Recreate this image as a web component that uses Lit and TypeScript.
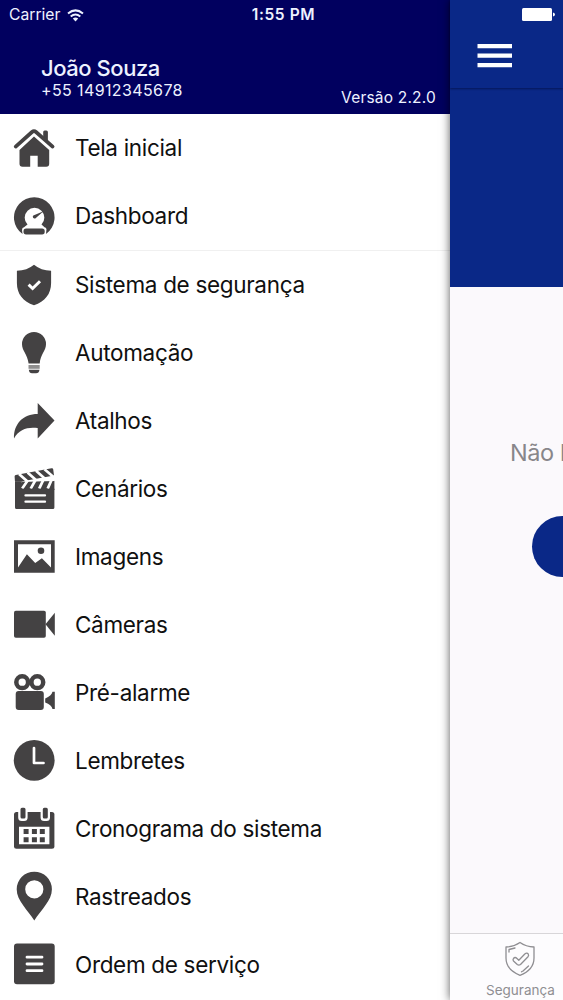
import { LitElement, html, css, svg } from "lit";
import { customElement } from "lit/decorators.js";

const icons = {
  home: svg`<path d="M5.7 27.6 22 13Q24 11.300 26 13L42.600 27.600" fill="none" stroke="currentColor" stroke-width="3.700" stroke-linecap="round" transform="translate(0 -1)"/>
    <path d="M33.200 17V12q0-1.500 1.500-1.500h1.700q1.500 0 1.500 1.500V22z"/>
    <path d="M24 16.600 39.200 30V43.700a3 3 0 0 1-3 3H27.700V35.700H20.200V46.700H12.500a3 3 0 0 1-3-3V30z"/>`,
  gauge: svg`<path d="M12.500 46A20.300 20.300 0 1 1 36 46L36.500 41Q36 39.500 34.500 39.300L31.500 36.500A9.800 9.800 0 1 0 17.500 36.500L14 39.300Q12 39.500 12 42z"/>
    <rect x="13.500" y="40.400" width="21.200" height="6" rx="2.600"/>
    <path d="M33.500 23.300 25.300 30.400A1.800 1.800 0 0 1 23.300 27.500z"/>`,
  shield: svg`<path d="M24 7.800Q31 13.600 41.100 13.700V26C41.100 37 35 44.500 24 48.200 13 44.500 6.900 37 6.900 26V13.700Q17 13.600 24 7.800z"/>
    <path d="M18.600 27.700 22.600 31.500 30 24.200" fill="none" stroke="#fff" stroke-width="3"/>`,
  bulb: svg`<path d="M24 7A12 12 0 0 1 36 19.300C36 26 30.500 29 29.700 38.500H18.600C17.500 29 12 26 12 19.300A12 12 0 0 1 24 7z"/>
    <path d="M18.500 40h11.200v3.800H18.500z" opacity=".6"/>
    <path d="M18.800 44.800H29.500Q29 48.300 26 48.300H22Q19.200 48.300 18.800 44.800z"/>`,
  share: svg`<path d="M27.700 10 44.500 27.500 27.700 45.500V35C18 33.700 9 36 4 45.500 3.500 31 13 21 27.700 21z"/>`,
  clapper: svg`<path d="M4.600 15.500Q4.600 14.300 5.800 14L41.500 7.300Q43 7 43.200 8.300L44 14.600 10 20.800H5z"/>
    <path d="M5 20.400H10L44.400 19.600V46.500a1.500 1.500 0 0 1-1.500 1.500H6.500A1.500 1.500 0 0 1 5 46.500z"/>
    <path d="M9 13 17.200 20.300 12.200 27.600M17.500 11.400 25.700 18.700 20.700 27.600M26 9.800 34.200 17 29.200 27.600M34.500 8.200 43 15.500 37.700 27.600" fill="none" stroke="#fff" stroke-width="2.700"/>
    <path d="M10 21.300 44.800 14.900V20L16 20.700z" fill="#fff"/>
    <path d="M11 27.700H44.400V29H11z"/>
    <path d="M15.500 34.400H35M15.500 40.700H35" fill="none" stroke="#fff" stroke-width="2.300" stroke-linecap="round"/>`,
  image: svg`<path fill-rule="evenodd" d="M4 11.300H44.700V43.700H4zM8 15.200V38.500L16.900 25.300 25.200 34 31.900 29.200 41 38.500V15.200z"/>
    <circle cx="31" cy="21.700" r="3.300"/>`,
  camera: svg`<rect x="4" y="13.700" width="31.800" height="27" rx="1.800"/><path d="M35.500 27.200 44.800 15.700V38.700z"/>`,
  film: svg`<g fill="none" stroke="currentColor" stroke-width="4.500"><circle cx="12.200" cy="17.200" r="5.900"/><circle cx="27.300" cy="17.200" r="5.900"/></g>
    <rect x="5.700" y="26" width="28.100" height="19" rx="3"/>
    <path d="M35.200 33.500Q41.500 31 42.500 26.800H44.800V44H42.500Q41.500 39.500 35.200 37.500z"/>`,
  clock: svg`<circle cx="24.200" cy="27.300" r="20.400"/><path d="M24 15V30H33.500" fill="none" stroke="#fff" stroke-width="2.700" stroke-linecap="round" stroke-linejoin="round"/>`,
  calendar: svg`<rect x="4" y="11" width="40.400" height="36.700" rx="2.500"/>
    <path d="M8.200 10H17.600V16.500a3.500 3.500 0 0 1-3.500 3.500H11.700a3.500 3.500 0 0 1-3.500-3.500zM30.600 10H40V16.500a3.500 3.500 0 0 1-3.500 3.500H34.100a3.500 3.500 0 0 1-3.500-3.500zM9 25.700H39.400V43.300H9z" fill="#fff"/>
    <path d="M10.500 8.300a1.500 1.500 0 0 1 1.500-1.500h2a1.500 1.500 0 0 1 1.500 1.500V16a1.500 1.500 0 0 1-1.500 1.500H12a1.500 1.500 0 0 1-1.500-1.500zM32.800 8.300a1.500 1.500 0 0 1 1.500-1.500h2a1.500 1.500 0 0 1 1.500 1.500V16a1.500 1.500 0 0 1-1.500 1.500H34.300a1.500 1.500 0 0 1-1.500-1.500z"/>
    <path d="M13.600 28.100h5v5h-5zM21.900 28.100h5v5h-5zM29.800 28.100h5v5h-5zM13.600 36.300h5v5h-5zM21.900 36.300h5v5h-5zM29.800 36.300h5v5h-5z"/>`,
  pin: svg`<path fill-rule="evenodd" d="M24.300 2.700A17.600 17.600 0 0 1 41.900 20.300C41.900 31.500 31 41 24.300 51.500 17.600 41 6.700 31.500 6.700 20.300A17.600 17.600 0 0 1 24.300 2.700zM24.300 11.200a9.100 9.100 0 1 0 0 18.200 9.100 9.100 0 0 0 0-18.200z"/>`,
  list: svg`<rect x="4" y="6.500" width="40.700" height="40.700" rx="3"/><path d="M17 20.200H32M17 27H32M17 33.700H32" fill="none" stroke="#fff" stroke-width="2.800" stroke-linecap="round"/>`,
};

const groups: [keyof typeof icons, string][][] = [
  [
    ["home", "Tela inicial"],
    ["gauge", "Dashboard"],
  ],
  [
    ["shield", "Sistema de segurança"],
    ["bulb", "Automação"],
    ["share", "Atalhos"],
    ["clapper", "Cenários"],
    ["image", "Imagens"],
    ["camera", "Câmeras"],
    ["film", "Pré-alarme"],
    ["clock", "Lembretes"],
    ["calendar", "Cronograma do sistema"],
    ["pin", "Rastreados"],
    ["list", "Ordem de serviço"],
  ],
];

@customElement("app-root")
export class AppRoot extends LitElement {
  static styles = css`
    :host {
      display: grid;
      grid-template-columns: 450px 113px;
      position: relative;
      width: 563px;
      height: 1000px;
      overflow: hidden;
      font-family: Inter, "Liberation Sans", sans-serif;
      background: #fff;
    }
    svg { display: block; flex: none; }
    .status {
      position: absolute;
      inset: 0 0 auto 0;
      z-index: 3;
      height: 28px;
      display: grid;
      grid-template-columns: 1fr auto 1fr;
      align-items: center;
      padding: 0 8px 0 9px;
      color: #eef2ff;
      font-size: 16px;
      line-height: 28px;
    }
    .carrier { display: flex; align-items: center; gap: 7px; font-size: 15.7px; }
    .time { font-weight: 600; font-size: 15.5px; letter-spacing: 0.6px; padding-left: 3px; line-height: 30px; }
    .battery { justify-self: end; }
    .drawer { min-width: 0; height: 1000px; overflow: hidden; }
    .profile {
      box-sizing: border-box;
      height: 114px;
      padding: 54px 14px 0 41px;
      background: #01005f;
      color: #eef2ff;
      display: flex;
      justify-content: space-between;
    }
    .name { font-size: 22px; line-height: 28px; font-weight: 500; letter-spacing: -0.45px; }
    .phone { font-size: 16px; line-height: 17px; letter-spacing: 0.38px; }
    .version { padding-top: 34px; font-size: 15.5px; line-height: 20px; letter-spacing: 0.2px; }
    .group + .group { border-top: 1px solid #f0f0f0; }
    .item {
      display: flex;
      align-items: center;
      height: 68px;
      padding-left: 10px;
      gap: 17px;
      color: #101010;
      font-size: 22.5px;
      letter-spacing: -0.32px;
      white-space: nowrap;
    }
    .item span { line-height: 28px; padding-bottom: 1px; }
    .item svg { color: #444243; fill: currentColor; }
    .page {
      position: relative;
      z-index: 2;
      display: flex;
      flex-direction: column;
      background: #fbf9fc;
      box-shadow: 0 0 9px 0 rgba(0, 0, 0, 0.65);
      white-space: nowrap;
      min-width: 0;
    }
    .nav {
      box-sizing: border-box;
      height: 88px;
      padding: 44px 0 0 27px;
      background: #0a2887;
      box-shadow: 0 1px 2px rgba(0, 0, 30, 0.45);
      z-index: 1;
    }
    .hero { height: 199px; background: #0a2887; }
    .body { flex: 1; overflow: hidden; }
    .empty { padding: 150px 0 0 60px; color: #88868a; font-size: 23.5px; line-height: 32px; letter-spacing: -0.4px; }
    .button { margin: 47px 0 0 82px; width: 200px; height: 61px; border-radius: 31px; background: #0a2887; }
    .tab {
      box-sizing: border-box;
      height: 67px;
      padding: 7px 0 0 36px;
      border-top: 1px solid #d8d6d9;
      background: #fdfcfe;
      color: #8f8e92;
      font-size: 13.5px;
      line-height: 16px;
      letter-spacing: 0;
    }
    .tab svg { margin: 0 0 5px 17px; }
  `;

  render() {
    return html`
      <div class="status">
        <div class="carrier">
          <span>Carrier</span>
          <svg width="17" height="13" viewBox="0 0 17 13" fill="none" stroke="currentColor" stroke-width="2">
            <path d="M1 4.500Q8.500 -1.700 16 4.500M3.700 7.500Q8.500 3.500 13.300 7.500" />
            <path d="M5.800 9.500Q8.500 7.400 11.200 9.500L8.500 12.400z" fill="currentColor" stroke="none" />
          </svg>
        </div>
        <span class="time">1:55 PM</span>
        <svg class="battery" width="33" height="14" viewBox="0 0 33 14" fill="#fff">
          <rect x="0" y="0" width="30" height="13" rx="1.500" />
          <path d="M31 4.500Q33 5 33 6.500T31 8.500z" />
        </svg>
      </div>
      <div class="drawer">
        <div class="profile">
          <div>
            <div class="name">João Souza</div>
            <div class="phone">+55 14912345678</div>
          </div>
          <div class="version">Versão 2.2.0</div>
        </div>
        ${groups.map(
          (group) => html`<div class="group">
            ${group.map(
              ([icon, label]) => html`<div class="item">
                <svg width="48" height="56" viewBox="0 0 48 56">${icons[icon]}</svg>
                <span>${label}</span>
              </div>`
            )}
          </div>`
        )}
      </div>
      <div class="page">
        <div class="nav">
          <svg width="35" height="24" viewBox="0 0 35 24" fill="#fff">
            <path d="M0.500 0H35V4.300H0.500zM0.500 9.500H35V13.800H0.500zM0.500 19H35V23.300H0.500z" />
          </svg>
        </div>
        <div class="hero"></div>
        <div class="body">
          <div class="empty">Não há</div>
          <div class="button"></div>
        </div>
        <div class="tab">
          <svg width="32" height="36" viewBox="0 0 32 36" fill="none" stroke="currentColor" stroke-width="1.300" stroke-linejoin="round" stroke-linecap="round">
            <path d="M17 1.500Q23 5.700 31 6V17C31 26 25.500 31 17 34.300 8.500 31 3 26 3 17V6Q11 5.700 17 1.500z" />
            <path d="M6 11V8.500L12 7M25.500 25 20 30M19 30.500 18.500 30.800" />
            <path d="M10.500 17.500Q12 15.500 14 17.500L15.800 19.300 21.800 13Q24 11.300 25.300 13.200 26 14.500 25 15.700L17.500 23.500Q15.800 24.800 14.300 23.500L10.500 20Q9.500 18.700 10.500 17.500z" />
          </svg>
          Segurança
        </div>
      </div>
    `;
  }
}
